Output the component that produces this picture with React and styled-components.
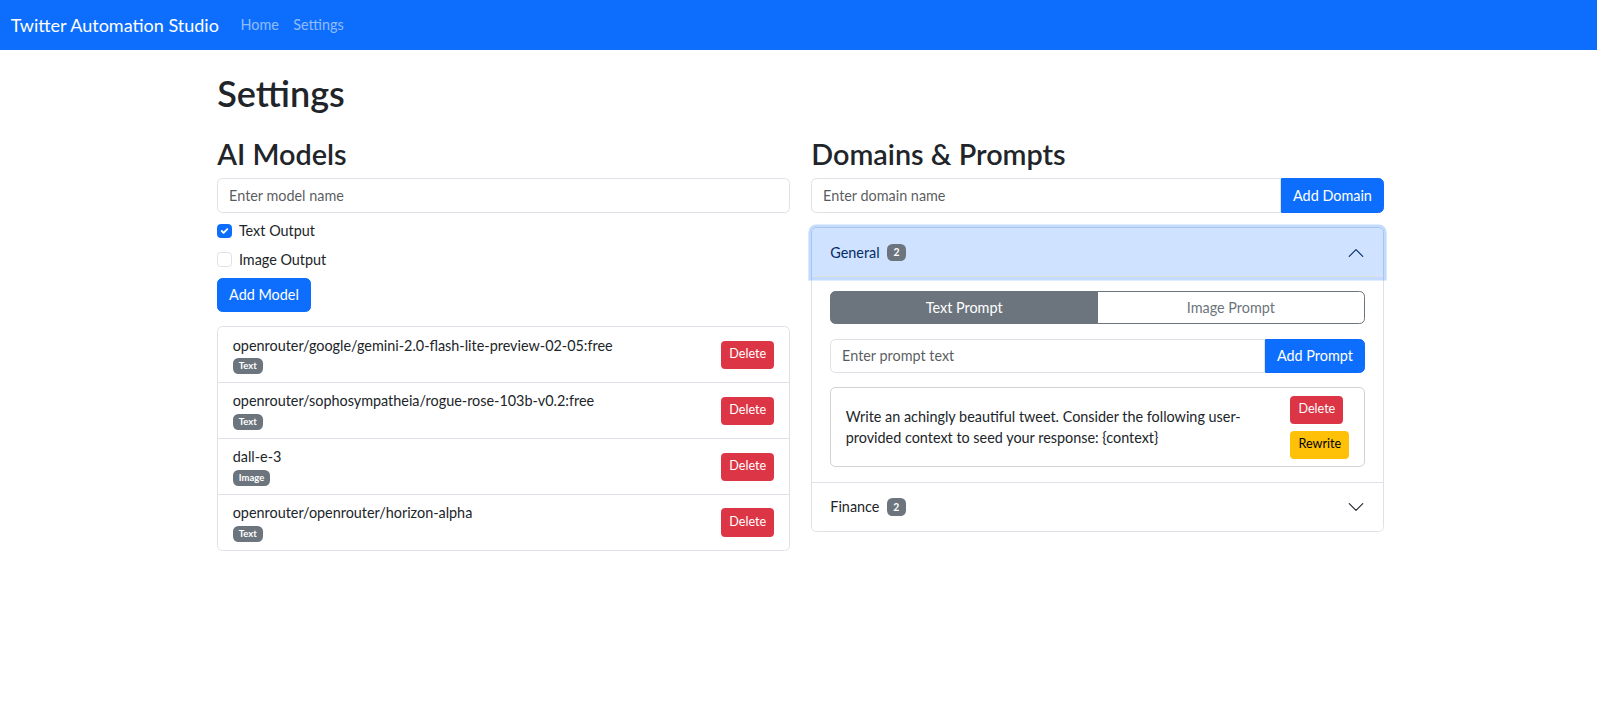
import React from "react";
import styled, { createGlobalStyle, css } from "styled-components";

const GlobalStyle = createGlobalStyle`
	* {
		box-sizing: border-box;
	}
	body {
		margin: 0;
		font-family: Lato, "Noto Sans", sans-serif;
		font-size: 14.4px;
		line-height: 1.5;
		color: #212529;
		background: #fff;
	}
`;

const Navbar = styled.nav`
	display: flex;
	align-items: center;
	padding: 7.2px 10.8px;
	background: #0d6efd;
`;

const Brand = styled.a`
	margin-right: 14.4px;
	padding: 4.5px 0;
	font-size: 18px;
	line-height: 27px;
	color: #fff;
	text-decoration: none;
`;

const NavLink = styled.a`
	padding: 7.2px;
	font-size: 14.4px;
	line-height: 21.6px;
	color: rgba(255, 255, 255, 0.55);
	text-decoration: none;
`;

const Container = styled.main`
	max-width: 1188px;
	margin: 21.6px auto 0;
	padding: 0 8.8px 0 12.8px;
`;

const PageTitle = styled.h1`
	margin: 0 0 21.6px;
	font-size: 36px;
	font-weight: 600;
	line-height: 1.2;
`;

const Columns = styled.div`
	display: grid;
	grid-template-columns: 1fr 1fr;
	column-gap: 21.6px;
	align-items: start;
`;

const SectionTitle = styled.h2`
	margin: 0 0 7.2px;
	font-size: 28.8px;
	font-weight: 600;
	line-height: 1.2;
`;

const TextInput = styled.input`
	display: block;
	width: 100%;
	height: 34.4px;
	margin-bottom: ${p => p.mb || 0};
	padding: 5.4px 10.8px;
	font-family: inherit;
	font-size: 14.4px;
	line-height: 1.5;
	color: #212529;
	background: #fff;
	border: 1px solid #dee2e6;
	border-radius: ${p => (p.grouped ? "5.4px 0 0 5.4px" : "5.4px")};
	outline: none;
	min-width: 0;
	&::placeholder {
		color: rgba(33, 37, 41, 0.75);
	}
`;

const CheckRow = styled.label`
	display: flex;
	align-items: center;
	gap: 7.2px;
	min-height: 21.6px;
	margin-bottom: 7.2px;
	line-height: 21.6px;
`;

const CheckBox = styled.span`
	display: inline-flex;
	align-items: center;
	justify-content: center;
	width: 14.4px;
	height: 14.4px;
	border-radius: 3.6px;
	border: 1px solid ${p => (p.checked ? "#0d6efd" : "#dee2e6")};
	background: ${p => (p.checked ? "#0d6efd" : "#fff")};
`;

const variants = {
	primary: css`
		background: #0d6efd;
		border-color: #0d6efd;
		color: #fff;
	`,
	danger: css`
		background: #dc3545;
		border-color: #dc3545;
		color: #fff;
	`,
	warning: css`
		background: #ffc107;
		border-color: #ffc107;
		color: #000;
	`,
};

const Button = styled.button`
	display: inline-block;
	padding: ${p => (p.small ? "3.6px 7.2px" : "5.4px 10.8px")};
	font-family: inherit;
	font-size: ${p => (p.small ? "12.6px" : "14.4px")};
	line-height: 1.5;
	border: 1px solid transparent;
	border-radius: ${p => (p.grouped ? "0 5.4px 5.4px 0" : p.small ? "3.6px" : "5.4px")};
	white-space: nowrap;
	cursor: pointer;
	${p => variants[p.variant || "primary"]}
`;

const ListGroup = styled.div`
	margin-top: 14.4px;
	border: 1px solid #dee2e6;
	border-radius: 5.4px;
`;

const ListItem = styled.div`
	display: flex;
	align-items: center;
	justify-content: space-between;
	padding: 7.2px 14.4px;
	& + & {
		border-top: 1px solid #dee2e6;
	}
`;

const ModelName = styled.div`
	line-height: 21.6px;
`;

const BadgeLine = styled.div`
	font-size: 12.6px;
	line-height: 18.9px;
`;

const Badge = styled.span`
	display: inline-block;
	padding: 0.35em 0.65em;
	font-size: ${p => p.size || "0.75em"};
	font-weight: 700;
	line-height: 1;
	color: #fff;
	background: #6c757d;
	border-radius: 5.4px;
	vertical-align: baseline;
`;

const InputGroup = styled.div`
	display: flex;
	margin-bottom: 14.4px;
`;

const Accordion = styled.div`
	border: 1px solid #dee2e6;
	border-radius: 5.4px;
`;

const AccordionItem = styled.div`
	& + & {
		border-top: 1px solid #dee2e6;
	}
`;

const AccordionHeader = styled.button`
	position: relative;
	display: flex;
	align-items: center;
	width: 100%;
	padding: 13.6px 18px;
	font-family: inherit;
	font-size: 14.4px;
	line-height: 21.6px;
	text-align: left;
	border: 0;
	cursor: pointer;
	color: ${p => (p.open ? "#052c65" : "#212529")};
	background: ${p => (p.open ? "#cfe2ff" : "#fff")};
	border-radius: ${p => (p.open ? "4.4px 4.4px 0 0" : "0 0 4.4px 4.4px")};
	${p =>
		p.open &&
		css`
			z-index: 3;
			box-shadow: inset 0 -1px 0 #dee2e6, 0 0 0 3.6px rgba(13, 110, 253, 0.25);
		`}
`;

const HeaderLabel = styled.span`
	display: flex;
	align-items: center;
	gap: 7.2px;
`;

const Chevron = styled.svg`
	margin-left: auto;
	width: 18px;
	height: 18px;
	transform: ${p => (p.open ? "rotate(-180deg)" : "none")};
`;

const AccordionBody = styled.div`
	padding: 14.4px 18px;
`;

const ToggleGroup = styled.div`
	display: flex;
	margin-bottom: 14.4px;
`;

const ToggleButton = styled.button`
	flex: 1;
	padding: 4.6px 10.8px;
	font-family: inherit;
	font-size: 14.4px;
	line-height: 1.5;
	border: 1px solid #6c757d;
	cursor: pointer;
	color: ${p => (p.active ? "#fff" : "#6c757d")};
	background: ${p => (p.active ? "#6c757d" : "#fff")};
	&:first-child {
		border-radius: 5.4px 0 0 5.4px;
	}
	&:last-child {
		border-radius: 0 5.4px 5.4px 0;
		margin-left: -1px;
	}
`;

const PromptCard = styled.div`
	display: flex;
	align-items: center;
	justify-content: space-between;
	gap: 14.4px;
	padding: 7.2px 14.4px;
	border: 1px solid rgba(0, 0, 0, 0.175);
	border-radius: 5.4px;
`;

const PromptText = styled.p`
	margin: 0;
	line-height: 21.6px;
`;

const PromptActions = styled.div`
	display: flex;
	flex-direction: column;
	align-items: flex-start;
	gap: 7.2px;
	flex-shrink: 0;
`;

const models = [
	{ name: "openrouter/google/gemini-2.0-flash-lite-preview-02-05:free", type: "Text" },
	{ name: "openrouter/sophosympatheia/rogue-rose-103b-v0.2:free", type: "Text" },
	{ name: "dall-e-3", type: "Image" },
	{ name: "openrouter/openrouter/horizon-alpha", type: "Text" },
];

const CheckIcon = () => (
	<svg width="14" height="14" viewBox="0 0 20 20">
		<path
			d="m6 10 3 3 6-6"
			fill="none"
			stroke="#fff"
			strokeWidth="3"
			strokeLinecap="round"
			strokeLinejoin="round"
		/>
	</svg>
);

const Check = ({ checked, label }) => (
	<CheckRow>
		<CheckBox checked={checked}>{checked && <CheckIcon />}</CheckBox>
		{label}
	</CheckRow>
);

const DomainHeader = ({ name, count, open }) => (
	<AccordionHeader open={open}>
		<HeaderLabel>
			{name}
			<Badge size="10.4px">{count}</Badge>
		</HeaderLabel>
		<Chevron open={open} viewBox="0 0 16 16">
			<path
				d="M2 5L8 11L14 5"
				fill="none"
				stroke={open ? "#052c65" : "#212529"}
				strokeLinecap="round"
				strokeLinejoin="round"
			/>
		</Chevron>
	</AccordionHeader>
);

export default function App() {
	return (
		<>
			<GlobalStyle />
			<Navbar>
				<Brand>Twitter Automation Studio</Brand>
				<NavLink>Home</NavLink>
				<NavLink>Settings</NavLink>
			</Navbar>
			<Container>
				<PageTitle>Settings</PageTitle>
				<Columns>
					<section>
						<SectionTitle>AI Models</SectionTitle>
						<TextInput placeholder="Enter model name" mb="7.2px" />
						<Check checked label="Text Output" />
						<Check label="Image Output" />
						<Button>Add Model</Button>
						<ListGroup>
							{models.map(m => (
								<ListItem key={m.name}>
									<div>
										<ModelName>{m.name}</ModelName>
										<BadgeLine>
											<Badge>{m.type}</Badge>
										</BadgeLine>
									</div>
									<Button small variant="danger">
										Delete
									</Button>
								</ListItem>
							))}
						</ListGroup>
					</section>
					<section>
						<SectionTitle>Domains &amp; Prompts</SectionTitle>
						<InputGroup>
							<TextInput grouped placeholder="Enter domain name" />
							<Button grouped>Add Domain</Button>
						</InputGroup>
						<Accordion>
							<AccordionItem>
								<DomainHeader name="General" count={2} open />
								<AccordionBody>
									<ToggleGroup>
										<ToggleButton active>Text Prompt</ToggleButton>
										<ToggleButton>Image Prompt</ToggleButton>
									</ToggleGroup>
									<InputGroup>
										<TextInput grouped placeholder="Enter prompt text" />
										<Button grouped>Add Prompt</Button>
									</InputGroup>
									<PromptCard>
										<PromptText>
											Write an achingly beautiful tweet. Consider the following
											user-provided context to seed your response: {"{context}"}
										</PromptText>
										<PromptActions>
											<Button small variant="danger">
												Delete
											</Button>
											<Button small variant="warning">
												Rewrite
											</Button>
										</PromptActions>
									</PromptCard>
								</AccordionBody>
							</AccordionItem>
							<AccordionItem>
								<DomainHeader name="Finance" count={2} />
							</AccordionItem>
						</Accordion>
					</section>
				</Columns>
			</Container>
		</>
	);
}
